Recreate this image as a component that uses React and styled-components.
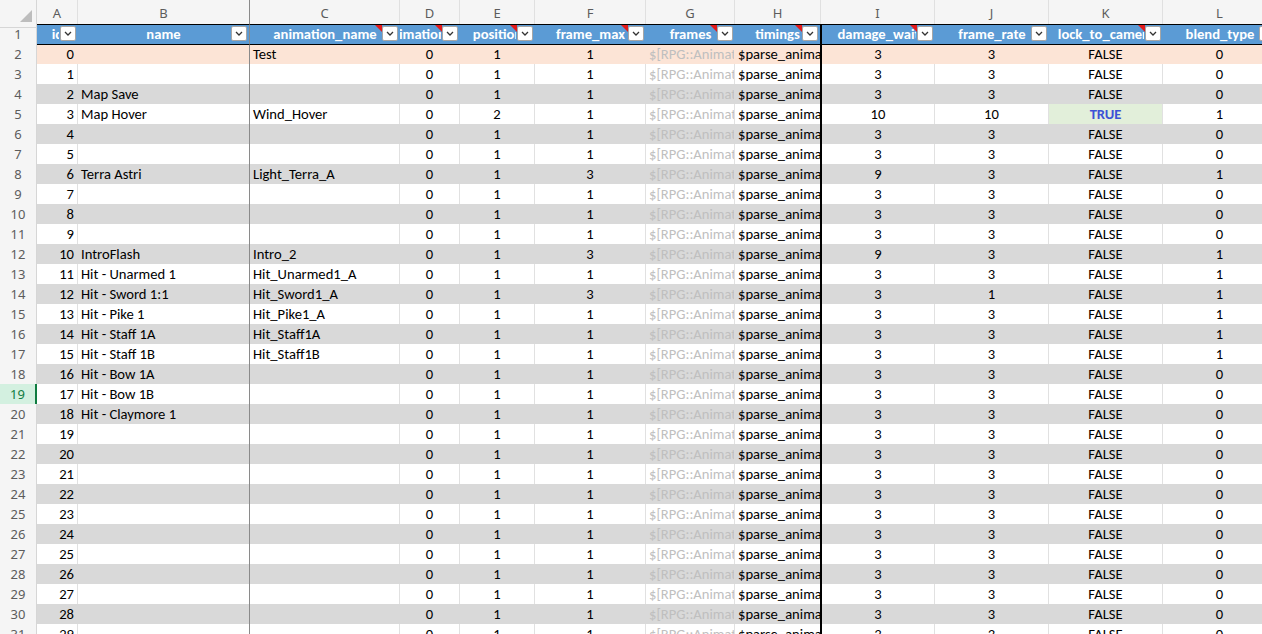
import React from 'react';
import styled, { createGlobalStyle } from 'styled-components';

const GlobalStyle = createGlobalStyle`
  html, body {
    margin: 0;
    padding: 0;
    background: #ffffff;
    overflow: hidden;
  }
`;

// column widths A..L (px), the row header is 37px
const COLS = [41, 172, 150, 60, 75, 111, 89, 86, 114, 114, 114, 114];
const TEMPLATE = `37px ${COLS.map((w) => w + 'px').join(' ')}`;
const LETTERS = ['A', 'B', 'C', 'D', 'E', 'F', 'G', 'H', 'I', 'J', 'K', 'L'];

const HEADERS = [
  { label: 'id' },
  { label: 'name' },
  { label: 'animation_name', note: true },
  { label: 'animation_hue', note: true },
  { label: 'position', note: true },
  { label: 'frame_max', note: true },
  { label: 'frames', note: true },
  { label: 'timings', note: true },
  { label: 'damage_wait', note: true },
  { label: 'frame_rate' },
  { label: 'lock_to_camera', note: true },
  { label: 'blend_type' },
];

// align per column
const ALIGN = ['right', 'left', 'left', 'center', 'center', 'center', 'left', 'left', 'center', 'center', 'center', 'center'];

const named = {
  2: ['Map Save', ''],
  3: ['Map Hover', 'Wind_Hover'],
  6: ['Terra Astri', 'Light_Terra_A'],
  10: ['IntroFlash', 'Intro_2'],
  11: ['Hit - Unarmed 1', 'Hit_Unarmed1_A'],
  12: ['Hit - Sword 1:1', 'Hit_Sword1_A'],
  13: ['Hit - Pike 1', 'Hit_Pike1_A'],
  14: ['Hit - Staff 1A', 'Hit_Staff1A'],
  15: ['Hit - Staff 1B', 'Hit_Staff1B'],
  16: ['Hit - Bow 1A', ''],
  17: ['Hit - Bow 1B', ''],
  18: ['Hit - Claymore 1', ''],
};

const special = {
  0: { anim: 'Test' },
  3: { pos: 2, wait: 10, rate: 10, lock: true, blend: 1 },
  6: { max: 3, wait: 9, blend: 1 },
  10: { max: 3, wait: 9, blend: 1 },
  11: { blend: 1 },
  12: { max: 3, rate: 1, blend: 1 },
  13: { blend: 1 },
  14: { blend: 1 },
  15: { blend: 1 },
};

const rows = Array.from({ length: 30 }, (_, id) => {
  const [name, anim] = named[id] || ['', ''];
  const s = special[id] || {};
  return {
    id,
    name,
    anim: s.anim || anim,
    hue: 0,
    pos: s.pos || 1,
    max: s.max || 1,
    frames: '$[RPG::Animati',
    timings: '$parse_animat',
    wait: s.wait || 3,
    rate: s.rate || 3,
    lock: !!s.lock,
    blend: s.blend || 0,
  };
});

const Sheet = styled.div`
  width: 1262px;
  height: 634px;
  overflow: hidden;
  font-family: Carlito, Lato, 'Liberation Sans', sans-serif;
  font-size: 14.6px;
  color: #000;
`;

const Row = styled.div`
  display: grid;
  grid-template-columns: ${TEMPLATE};
  height: ${(p) => p.$h || 20}px;
`;

const Corner = styled.div`
  position: relative;
  box-sizing: border-box;
  background: #f5f5f5;
  border-right: 1px solid #d6d6d6;
  border-bottom: 1px solid #d6d6d6;

  &::after {
    content: '';
    position: absolute;
    right: 4px;
    bottom: 5px;
    width: 0;
    height: 0;
    border-left: 12px solid transparent;
    border-bottom: 12px solid #bdbdbd;
  }
`;

const ColLetter = styled.div`
  box-sizing: border-box;
  background: #f5f5f5;
  border-right: 1px solid ${(p) => (p.$split ? '#8a8a8a' : '#e0e0e0')};
  border-bottom: 1px solid #d6d6d6;
  font-family: 'Noto Sans', 'Open Sans', sans-serif;
  font-size: 13px;
  color: #5c5c5c;
  text-align: center;
  line-height: 27px;
`;

const RowNum = styled.div`
  box-sizing: border-box;
  background: ${(p) => (p.$active ? '#d3f0e0' : '#f5f5f5')};
  color: ${(p) => (p.$active ? '#107c41' : '#5c5c5c')};
  border-right: ${(p) => (p.$active ? '2px solid #107c41' : '1px solid #d6d6d6')};
  border-bottom: 1px solid #e3e3e3;
  font-family: 'Noto Sans', 'Open Sans', sans-serif;
  font-size: 13px;
  text-align: center;
  line-height: 20px;
`;

const HeadCell = styled.div`
  position: relative;
  box-sizing: border-box;
  overflow: hidden;
  background: #5b9bd5;
  border-top: 1px solid #000;
  border-bottom: 1px solid #000;
  border-right: ${(p) => (p.$edge === 'split' ? '1px solid #8a8a8a' : p.$edge === 'black' ? '1px solid #000' : 'none')};
  border-left: ${(p) => (p.$edge === 'left' ? '1px solid #000' : 'none')};
`;

const LabelClip = styled.div`
  width: calc(100% - 19px);
  height: 100%;
  overflow: hidden;
`;

const Label = styled.div`
  width: calc(100% + 19px);
  display: flex;
  justify-content: center;
  white-space: nowrap;
  color: #ffffff;
  font-weight: 700;
  line-height: 19px;
`;

const Note = styled.span`
  position: absolute;
  top: 0;
  right: 18px;
  width: 0;
  height: 0;
  border-top: 7px solid #e31b1b;
  border-left: 7px solid transparent;
`;

const Dropdown = styled.span`
  position: absolute;
  top: 1px;
  right: 2px;
  width: 16px;
  height: 15px;
  box-sizing: border-box;
  background: #ffffff;
  border: 1px solid #a6a6a6;
  border-radius: 2px;
  display: flex;
  align-items: center;
  justify-content: center;
`;

const Cell = styled.div`
  box-sizing: border-box;
  overflow: hidden;
  white-space: nowrap;
  background: ${(p) => p.$bg};
  color: ${(p) => p.$color || '#000'};
  font-weight: ${(p) => p.$weight || 400};
  text-align: ${(p) => p.$align};
  padding: 0 3px;
  line-height: 21px;
  border-right: ${(p) =>
    p.$edge === 'split' ? '1px solid #8a8a8a' : p.$edge === 'black' ? '1px solid #000' : `1px solid ${p.$grid ? '#e1e1e1' : 'transparent'}`};
  border-left: ${(p) => (p.$edge === 'left' ? '1px solid #000' : 'none')};
`;

const edgeFor = (i) => (i === 1 ? 'split' : i === 7 ? 'black' : i === 8 ? 'left' : null);

const Chevron = () => (
  <svg width="8" height="5" viewBox="0 0 8 5">
    <path d="M1 1 L4 4 L7 1" fill="none" stroke="#333" strokeWidth="1.3" />
  </svg>
);

const bandColor = (r) => (r === 2 ? '#fce4d6' : r % 2 === 0 ? '#d9d9d9' : '#ffffff');

export default function App() {
  return (
    <>
      <GlobalStyle />
      <Sheet>
        <Row $h={24}>
          <Corner />
          {LETTERS.map((l, i) => (
            <ColLetter key={l} $split={i === 1}>
              {l}
            </ColLetter>
          ))}
        </Row>

        <Row>
          <RowNum>1</RowNum>
          {HEADERS.map((h, i) => (
            <HeadCell key={h.label} $edge={edgeFor(i)}>
              <LabelClip>
                <Label>{h.label}</Label>
              </LabelClip>
              {h.note && <Note />}
              <Dropdown>
                <Chevron />
              </Dropdown>
            </HeadCell>
          ))}
        </Row>

        {rows.map((d, idx) => {
          const r = idx + 2;
          const bg = bandColor(r);
          const grid = bg === '#ffffff';
          const values = [d.id, d.name, d.anim, d.hue, d.pos, d.max, d.frames, d.timings, d.wait, d.rate, d.lock ? 'TRUE' : 'FALSE', d.blend];
          return (
            <Row key={r}>
              <RowNum $active={r === 19}>{r}</RowNum>
              {values.map((v, i) => {
                const isTrue = i === 10 && d.lock;
                return (
                  <Cell
                    key={i}
                    $bg={isTrue ? '#e2efda' : bg}
                    $grid={grid}
                    $align={ALIGN[i]}
                    $edge={edgeFor(i)}
                    $color={i === 6 ? '#bfbfbf' : isTrue ? '#3c52d6' : undefined}
                    $weight={isTrue ? 600 : undefined}
                  >
                    {v}
                  </Cell>
                );
              })}
            </Row>
          );
        })}
      </Sheet>
    </>
  );
}
